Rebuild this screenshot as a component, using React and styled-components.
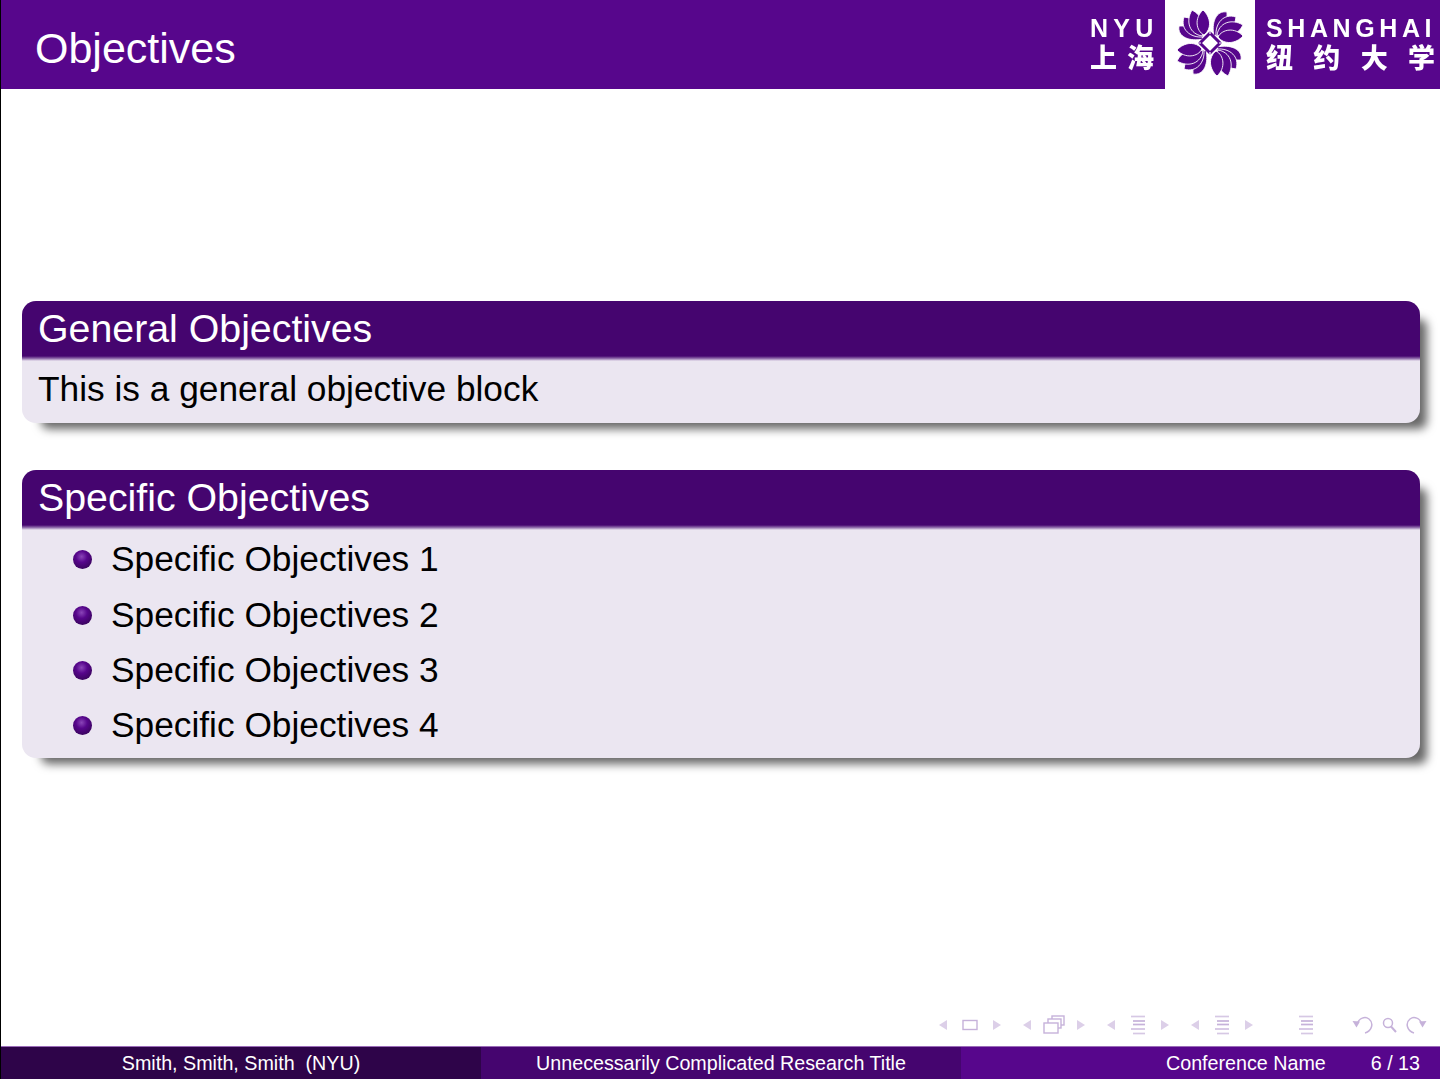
import React from "react";
import styled, { createGlobalStyle } from "styled-components";

const PURPLE = "#57068c";
const DARK = "#45056f";
const DARKEST = "#2e0449";
const NAV = "#c6b2da";
const NAV_LIGHT = "#dccfe8";

const specificItems = [
  "Specific Objectives 1",
  "Specific Objectives 2",
  "Specific Objectives 3",
  "Specific Objectives 4",
];

const Petals = () => (
  <g fill={PURPLE} stroke="#ffffff" strokeWidth="0.9" strokeLinejoin="miter">
    <path d="M-31 -17 C-33 -6 -20 -1 -7 -4 C-8 -12 -19 -18 -31 -17 Z" />
    <path d="M-26 -26 C-30 -14 -20 -5 -7 -6 C-7 -16 -15 -25 -26 -26 Z" />
    <path d="M-18 -33 C-25 -21 -20 -9 -8 -7 C-4 -17 -8 -28 -18 -33 Z" />
    <path d="M-7 -33 C-16 -25 -14 -12 -6 -8 C2 -14 1 -26 -7 -33 Z" />
  </g>
);

const Flower = () => (
  <svg width="90" height="89" viewBox="-45 -43 90 89">
    {[0, 90, 180, 270].map((angle) => (
      <g key={angle} transform={`rotate(${angle})`}>
        <Petals />
      </g>
    ))}
    <path
      d="M0 -10 L10 0 L0 10 L-10 0 Z"
      fill="#ffffff"
      stroke={PURPLE}
      strokeWidth="3"
    />
    <path d="M0 -13 V-9 M13 0 H9 M0 13 V9 M-13 0 H-9" stroke="#ffffff" strokeWidth="1.2" />
  </svg>
);

const Triangle = ({ dir }) => (
  <svg width="9" height="12" viewBox="0 0 9 12">
    <path
      d={dir === "left" ? "M9 1 L1 6 L9 11 Z" : "M0 1 L8 6 L0 11 Z"}
      fill={NAV_LIGHT}
    />
  </svg>
);

const SlideIcon = () => (
  <svg width="16" height="12" viewBox="0 0 16 12">
    <rect x="1" y="1.5" width="14" height="9" fill="none" stroke={NAV} strokeWidth="1.4" />
  </svg>
);

const FrameIcon = () => (
  <svg width="22" height="20" viewBox="0 0 22 20">
    <g fill="#ffffff" stroke={NAV} strokeWidth="1.4">
      <rect x="9" y="1" width="12" height="9" />
      <rect x="5" y="4" width="13" height="9" />
      <rect x="1" y="8" width="14" height="10" />
    </g>
  </svg>
);

const ListIcon = () => (
  <svg width="16" height="20" viewBox="0 0 16 20">
    <g stroke={NAV} strokeWidth="1.7">
      <path d="M1 1.5 H15" opacity="0.7" />
      <path d="M3 6 H15" />
      <path d="M3 9.5 H15" />
      <path d="M1 14 H15" opacity="0.8" />
      <path d="M3 18.5 H15" opacity="0.7" />
    </g>
  </svg>
);

const UndoIcon = ({ flip }) => (
  <svg
    width="22"
    height="20"
    viewBox="0 0 22 20"
    transform={flip ? "scale(-1 1)" : undefined}
  >
    <path
      d="M5 9 C7 3 13 1 17 4 C22 8 20 16 13 18"
      fill="none"
      stroke={NAV}
      strokeWidth="1.5"
    />
    <path d="M0.5 6 L8 6.5 L4.5 12.5 Z" fill={NAV} />
  </svg>
);

const SearchIcon = () => (
  <svg width="15" height="16" viewBox="0 0 15 16">
    <circle cx="6" cy="6" r="4.5" fill="none" stroke={NAV} strokeWidth="1.5" />
    <path d="M9 9.5 L14 15" stroke={NAV} strokeWidth="2" />
  </svg>
);

const NavGroup = ({ children }) => (
  <Group>
    <Triangle dir="left" />
    {children}
    <Triangle dir="right" />
  </Group>
);

const App = () => {
  return (
    <Slide>
      <GlobalStyle />
      <Header>
        <FrameTitle>Objectives</FrameTitle>
        <Logo>
          <NyuText>
            <LatinName $spacing="5.2px">NYU</LatinName>
            <CjkName>
              <span>上</span>
              <span>海</span>
            </CjkName>
          </NyuText>
          <FlowerTile>
            <Flower />
          </FlowerTile>
          <ShanghaiText>
            <LatinName $spacing="4.6px">SHANGHAI</LatinName>
            <CjkName>
              <span>纽</span>
              <span>约</span>
              <span>大</span>
              <span>学</span>
            </CjkName>
          </ShanghaiText>
        </Logo>
      </Header>

      <Content>
        <Block>
          <BlockTitle>General Objectives</BlockTitle>
          <BlockBody>This is a general objective block</BlockBody>
        </Block>
        <Block>
          <BlockTitle>Specific Objectives</BlockTitle>
          <BlockList>
            {specificItems.map((item) => (
              <Item key={item}>
                <Bullet />
                {item}
              </Item>
            ))}
          </BlockList>
        </Block>
      </Content>

      <NavBar>
        <NavGroup>
          <SlideIcon />
        </NavGroup>
        <NavGroup>
          <FrameIcon />
        </NavGroup>
        <NavGroup>
          <ListIcon />
        </NavGroup>
        <NavGroup>
          <ListIcon />
        </NavGroup>
        <Single>
          <ListIcon />
        </Single>
        <SearchGroup>
          <UndoIcon />
          <SearchIcon />
          <UndoIcon flip />
        </SearchGroup>
      </NavBar>

      <Footer>
        <FooterCell $bg={DARKEST}>Smith, Smith, Smith&nbsp; (NYU)</FooterCell>
        <FooterCell $bg={DARK}>Unnecessarily Complicated Research Title</FooterCell>
        <FooterRight>
          <span>Conference Name</span>
          <span>6 / 13</span>
        </FooterRight>
      </Footer>
    </Slide>
  );
};

export default App;

const GlobalStyle = createGlobalStyle`
  html, body {
    margin: 0;
    padding: 0;
    background: #ffffff;
  }
  body {
    font-family: "Liberation Sans", Arial, sans-serif;
  }
`;

const Slide = styled.div`
  box-sizing: border-box;
  width: 1441px;
  height: 1079px;
  display: flex;
  flex-direction: column;
  border-left: 1px solid #000000;
  border-right: 1px solid #ffffff;
  overflow: hidden;
`;

const Header = styled.header`
  height: 89px;
  flex-shrink: 0;
  display: flex;
  align-items: stretch;
  justify-content: space-between;
  background: ${PURPLE};
  color: #ffffff;
`;

const FrameTitle = styled.div`
  padding-left: 34px;
  font-size: 43px;
  line-height: 96px;
`;

const Logo = styled.div`
  display: flex;
  align-items: stretch;
  filter: blur(0.4px);
`;

const NyuText = styled.div`
  width: 64px;
  margin-right: 11px;
  padding-top: 14px;
  display: flex;
  flex-direction: column;
`;

const ShanghaiText = styled.div`
  width: 169px;
  margin: 0 5px 0 11px;
  padding-top: 14px;
  display: flex;
  flex-direction: column;
`;

const LatinName = styled.div`
  font-size: 25px;
  line-height: 28px;
  font-weight: 700;
  letter-spacing: ${(props) => props.$spacing};
  white-space: nowrap;
`;

const CjkName = styled.div`
  display: flex;
  justify-content: space-between;
  margin-top: -1px;
  font-family: "Noto Sans CJK SC", sans-serif;
  font-size: 27px;
  line-height: 32px;
  font-weight: 900;
`;

const FlowerTile = styled.div`
  width: 90px;
  background: #ffffff;
  display: flex;
  align-items: center;
  justify-content: center;
`;

const Content = styled.main`
  flex: 1;
  display: flex;
  flex-direction: column;
  justify-content: center;
  gap: 47px;
  padding: 0 20px 0 21px;
`;

const Block = styled.section`
  border-radius: 14px;
  background: #ebe6f1;
  box-shadow: 13px 12px 10px -6px rgba(0, 0, 0, 0.6);
`;

const BlockTitle = styled.div`
  height: 60px;
  box-sizing: border-box;
  padding-left: 16px;
  border-radius: 14px 14px 0 0;
  background: linear-gradient(to bottom, ${DARK} 55px, #8f6bab 57.5px, #ebe6f1 60px);
  color: #ffffff;
  font-size: 39.3px;
  line-height: 54px;
`;

const BlockBody = styled.div`
  height: 62px;
  box-sizing: border-box;
  padding-left: 16px;
  color: #000000;
  font-size: 35.3px;
  line-height: 56px;
`;

const BlockList = styled.ul`
  list-style: none;
  margin: 0;
  padding: 1.4px 0 4.6px 51px;
`;

const Item = styled.li`
  display: flex;
  align-items: center;
  gap: 19px;
  height: 55.4px;
  color: #000000;
  font-size: 35.3px;
`;

const Bullet = styled.span`
  width: 19px;
  height: 19px;
  margin-top: 1px;
  flex-shrink: 0;
  border-radius: 50%;
  background: radial-gradient(circle at 45% 35%, #8a45b8 0%, ${PURPLE} 35%, #2a0345 100%);
`;

const NavBar = styled.nav`
  height: 76px;
  flex-shrink: 0;
  box-sizing: border-box;
  display: flex;
  align-items: center;
  justify-content: flex-end;
  padding: 44px 13px 10px 0;
  gap: 20px;
`;

const Group = styled.div`
  width: 64px;
  display: flex;
  align-items: center;
  justify-content: space-between;
`;

const Single = styled.div`
  margin-left: 24px;
  display: flex;
  align-items: center;
`;

const SearchGroup = styled.div`
  margin-left: 18px;
  display: flex;
  align-items: center;
  gap: 8px;
`;

const Footer = styled.footer`
  height: 33px;
  flex-shrink: 0;
  display: grid;
  grid-template-columns: 480px 480px 1fr;
  border-top: 1px solid #9a6cb8;
  box-sizing: border-box;
  color: #ffffff;
  font-size: 19.7px;
  line-height: 32px;
`;

const FooterCell = styled.div`
  background: ${(props) => props.$bg};
  text-align: center;
  white-space: nowrap;
`;

const FooterRight = styled.div`
  display: flex;
  justify-content: space-between;
  padding: 0 20px 0 205px;
  background: ${PURPLE};
`;
